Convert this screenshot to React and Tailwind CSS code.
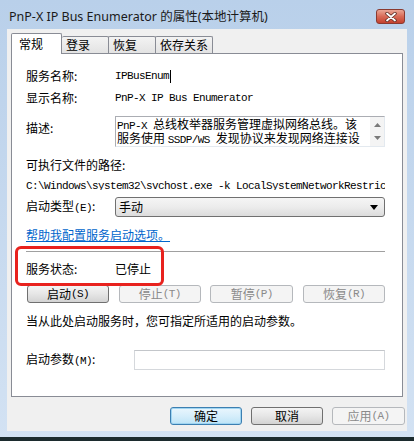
import React from 'react';

const cjk = "font-['Noto_Sans_CJK_SC',sans-serif]";
const mono = "font-['Liberation_Mono','Noto_Sans_CJK_SC',monospace] text-[11px] tracking-[-0.6px]";

const Mono = ({ children }) => <span className={mono}>{children}</span>;

const Label = ({ children, className = '' }) => (
  <div className={`w-[89px] shrink-0 text-[12px] leading-[16px] text-black ${className}`}>{children}</div>
);

const WinButton = ({ children, disabled, primary, className = '' }) => {
  let look = 'border-[#707070] bg-gradient-to-b from-[#f4f4f4] via-[#e6e6e6] to-[#d3d3d3] text-black';
  if (disabled) look = 'border-[#b5b8bc] bg-[#f4f4f4] text-[#8a8a8a]';
  if (primary) look = 'border-[#3c7fb1] bg-gradient-to-b from-[#eaf6fd] via-[#d6eefb] to-[#bde4f7] text-black shadow-[inset_0_0_0_1px_#9fd5f2]';
  return (
    <div className={`h-[18px] rounded-[3px] border flex items-center justify-center text-[12px] leading-none ${look} ${className}`}>
      {children}
    </div>
  );
};

const tabs = ['登录', '恢复', '依存关系'];

export default function App() {
  return (
    <div className={`w-[414px] h-[441px] flex flex-col bg-gradient-to-b from-[#b9d0ea] to-[#d3e2f3] ${cjk}`}>
      {/* title bar */}
      <div className="h-[29px] flex items-start justify-between pl-[9px] pr-[9px] shrink-0">
        <div className="pt-[8px] text-[12.5px] leading-[18px] text-[#1a1a1a] font-['Noto_Sans','Noto_Sans_CJK_SC',sans-serif]">
          PnP-X IP Bus Enumerator 的属性(本地计算机)
        </div>
        <div className="mt-[9px] w-[29px] h-[15px] rounded-[3px] border border-[#8a3a30] bg-gradient-to-b from-[#e9a595] via-[#d86a57] to-[#c4402d] flex items-center justify-center">
          <svg width="12" height="10" viewBox="0 0 12 10">
            <path d="M2 1.5 L10 8.5 M10 1.5 L2 8.5" stroke="#5a2a22" strokeWidth="3.4" strokeLinecap="round" />
            <path d="M2 1.5 L10 8.5 M10 1.5 L2 8.5" stroke="#ffffff" strokeWidth="1.8" strokeLinecap="round" />
          </svg>
        </div>
      </div>

      {/* client area */}
      <div className="flex-1 mx-[7px] bg-[#f0f0f0] flex flex-col">
        {/* tabs */}
        <div className="flex items-end pl-[4px] pt-[4px] h-[24px] shrink-0">
          <div className="relative z-10 -mb-px w-[51px] h-[21px] bg-white border border-b-0 border-[#898c95] rounded-t-[2px] text-[12px] leading-[16px] pl-[7px] pt-[2px]">
            常规
          </div>
          {tabs.map((t, i) => (
            <div
              key={t}
              className={`h-[17px] border border-b-0 border-[#898c95] rounded-t-[2px] bg-gradient-to-b from-[#f3f3f3] to-[#e3e3e3] text-[12px] leading-[16px] px-[4px] ${i === 0 ? 'w-[47px] border-l-0' : i === 1 ? 'w-[48px] -ml-px' : 'w-[58px] -ml-px'}`}
            >
              {t}
            </div>
          ))}
        </div>

        {/* panel */}
        <div className="relative mx-[4px] h-[344px] bg-white border border-[#898c95] pl-[14px] pr-[17px] flex flex-col shrink-0">
          <div className="flex items-center mt-[14px] h-[16px]">
            <Label>服务名称:</Label>
            <div className="flex items-center">
              <Mono>IPBusEnum</Mono>
              <span className="ml-[1px] w-px h-[13px] bg-black" />
            </div>
          </div>

          <div className="flex items-center mt-[6px] h-[16px]">
            <Label>显示名称:</Label>
            <Mono>PnP-X IP Bus Enumerator</Mono>
          </div>

          <div className="flex mt-[10px]">
            <Label className="pt-[4px]">描述:</Label>
            <div className="flex-1 h-[31px] border border-[#abadb3] border-r-[#e3e9ef] border-b-[#e3e9ef] flex">
              <div className="flex-1 min-w-0 pl-[1px] text-[12px] leading-[14px] whitespace-nowrap">
                <div className="h-[14px] overflow-hidden"><Mono>PnP-X </Mono>总线枚举器服务管理虚拟网络总线。该</div>
                <div className="h-[14px] overflow-hidden">服务使用 <Mono>SSDP/WS </Mono>发现协议来发现网络连接设</div>
              </div>
              <div className="w-[14px] bg-[#f4f4f4] flex flex-col items-center justify-between py-[6px]">
                <svg width="7" height="4" viewBox="0 0 7 4"><path d="M0 4 L3.5 0 L7 4 Z" fill="#7a7a7a" /></svg>
                <svg width="7" height="4" viewBox="0 0 7 4"><path d="M0 0 L3.5 4 L7 0 Z" fill="#7a7a7a" /></svg>
              </div>
            </div>
          </div>

          <div className="mt-[10px] h-[16px] text-[12px] leading-[16px]">可执行文件的路径:</div>
          <div className="mt-[1px] h-[16px] leading-[16px] overflow-hidden whitespace-nowrap">
            <Mono>{'C:\\Windows\\system32\\svchost.exe -k LocalSystemNetworkRestricted'}</Mono>
          </div>

          <div className="flex items-center mt-[7px]">
            <Label>启动类型<Mono>(E)</Mono>:</Label>
            <div className="flex-1 h-[20px] rounded-[3px] border border-[#707070] bg-gradient-to-b from-[#f5f5f5] via-[#ececec] to-[#dcdcdc] flex items-center justify-between pl-[3px] pr-[6px] text-[12px]">
              <span>手动</span>
              <svg width="8" height="5" viewBox="0 0 8 5"><path d="M0 0 L8 0 L4 5 Z" fill="#000" /></svg>
            </div>
          </div>

          <div className="mt-[10px] h-[16px] text-[12px] leading-[16px] text-[#0066cc] underline">帮助我配置服务启动选项。</div>

          <div className="mt-[8px] h-px bg-[#a0a0a0]" />

          <div className="flex items-center mt-[9px] h-[16px]">
            <Label>服务状态:</Label>
            <span className="text-[12px]">已停止</span>
          </div>

          <div className="flex justify-between mt-[8px] pl-[1px]">
            <WinButton className="w-[82px]">启动<Mono>(S)</Mono></WinButton>
            <WinButton disabled className="w-[82px]">停止<Mono>(T)</Mono></WinButton>
            <WinButton disabled className="w-[83px]">暂停<Mono>(P)</Mono></WinButton>
            <WinButton disabled className="w-[82px]">恢复<Mono>(R)</Mono></WinButton>
          </div>

          <div className="mt-[10px] h-[16px] text-[12px] leading-[16px]">当从此处启动服务时，您可指定所适用的启动参数。</div>

          <div className="flex items-center mt-[21px]">
            <Label className="w-[108px]">启动参数<Mono>(M)</Mono>:</Label>
            <div className="flex-1 h-[20px] border border-[#d5d8dc] border-t-[#c3c6ca]" />
          </div>

          {/* red highlight */}
          <div className="absolute left-[3px] top-[192px] w-[149px] h-[40px] rounded-[6px] border-[3px] border-[#e8221e]" />
        </div>

        {/* footer buttons */}
        <div className="flex justify-end gap-[9px] mt-[10px] pr-[2px]">
          <WinButton primary className="w-[72px]">确定</WinButton>
          <WinButton className="w-[72px]">取消</WinButton>
          <WinButton disabled className="w-[73px]">应用<Mono>(A)</Mono></WinButton>
        </div>
      </div>

      <div className="h-[6px] shrink-0" />
      <div className="h-[4px] bg-[#1c2b2e] shrink-0" />
    </div>
  );
}
